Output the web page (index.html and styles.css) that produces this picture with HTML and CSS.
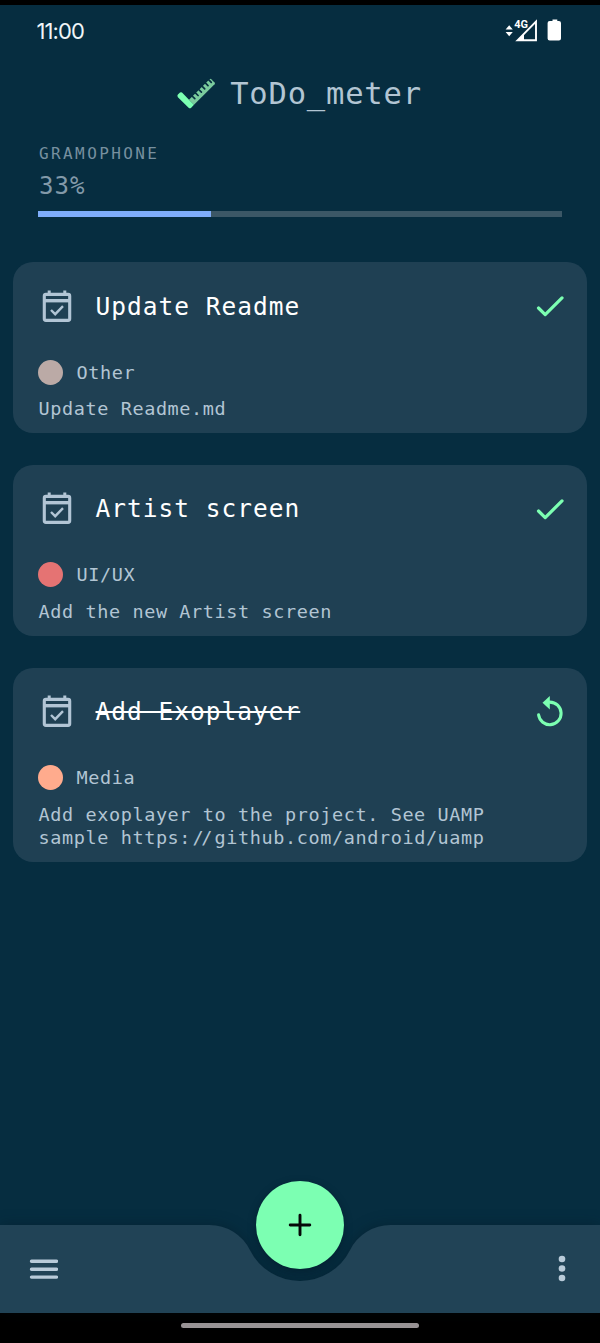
FILE: index.html
```html
<!DOCTYPE html>
<html lang="en">
<head>
<meta charset="utf-8">
<title>ToDo_meter</title>
<link rel="stylesheet" href="styles.css">
</head>
<body>
<svg class="defs" aria-hidden="true">
  <symbol id="calendar" viewBox="0 0 30 33">
    <path d="M7.200 0.500v4M22.800 0.500v4" stroke="currentColor" stroke-width="3"/>
    <path d="M2.300 10.700h25.400" stroke="currentColor" stroke-width="3.400"/>
    <rect x="2.300" y="4.400" width="25.400" height="26" rx="1.600" fill="none" stroke="currentColor" stroke-width="3.100"/>
    <path d="M9 20l4.200 4.200L21 16.100" fill="none" stroke="currentColor" stroke-width="2.400"/>
  </symbol>
  <symbol id="check" viewBox="0 0 28 22">
    <path d="M2.500 13l6.700 6.600L26 2.900" fill="none" stroke="currentColor" stroke-width="3.200" stroke-linecap="round" stroke-linejoin="round"/>
  </symbol>
  <symbol id="undo" viewBox="0 0 28 32">
    <path d="M13.800 6.100A11.300 11.300 0 1 1 2.600 18.900" fill="none" stroke="currentColor" stroke-width="3.100" stroke-linecap="round"/>
    <path d="M13.800 0v13.600L6.500 6.700z" fill="currentColor"/>
  </symbol>
</svg>
<div class="phone">
  <div class="status">
    <span class="clock">11:00</span>
    <svg class="status-icons" width="60" height="24" viewBox="0 0 60 24">
      <path d="M0.600 10.500h7.200L4.200 6.200zM0.600 12.900h7.200l-3.600 4.300z" fill="#fff"/>
      <path d="M12.500 21.300L31 2.500v18.800z" fill="none" stroke="#fff" stroke-width="1.900"/>
      <path d="M12 22l7-7v7z" fill="#fff"/>
      <text x="9.300" y="9" class="network">4G</text>
      <path d="M47 2h0.500V0.600h4.800V2h1.600q2.100 0 2.100 2.100V19.400q0 2.100-2.100 2.100H44.700q-2.100 0-2.100-2.100V4.100Q42.600 2 44.700 2z" fill="#fff"/>
    </svg>
  </div>

  <header class="brand">
    <svg class="logo" width="39" height="31" viewBox="0 0 39 31">
      <path d="M11 21.800L16 26.800L36.600 6.200Q37.400 5.300 36.600 4.400L33.200 1.200Q32.400 0.500 31.600 1.200z" fill="#7acb9d"/>
      <path d="M14.100 18l2.700 2.700M17.400 14.800l2.700 2.700M20.700 11.500l2.700 2.700M24 8.200l2.700 2.700M27.300 4.900l2.700 2.700M30.600 1.600l2.700 2.700" stroke="#062d40" stroke-width="1.700" stroke-linecap="round"/>
      <path d="M11 21.800L4 14.600Q3 13.700 2 14.600L-0.100 16.600Q-1.200 17.900 -0.100 19.200L10.600 29.700Q11.900 30.800 13.200 29.700L16 26.800z" fill="#7cffb2"/>
    </svg>
    <h1>ToDo_meter</h1>
  </header>

  <section class="progress">
    <div class="project">GRAMOPHONE</div>
    <div class="percent">33%</div>
    <div class="track"><div class="fill" style="width:33%"></div></div>
  </section>

  <main class="tasks">
    <article class="task">
      <div class="head">
        <svg class="cal"><use href="#calendar"/></svg>
        <h2>Update Readme</h2>
        <svg class="done"><use href="#check"/></svg>
      </div>
      <div class="tag"><i class="dot other"></i>Other</div>
      <p>Update Readme.md</p>
    </article>
    <article class="task">
      <div class="head">
        <svg class="cal"><use href="#calendar"/></svg>
        <h2>Artist screen</h2>
        <svg class="done"><use href="#check"/></svg>
      </div>
      <div class="tag"><i class="dot ui"></i>UI/UX</div>
      <p>Add the new Artist screen</p>
    </article>
    <article class="task">
      <div class="head">
        <svg class="cal"><use href="#calendar"/></svg>
        <h2 class="struck">Add Exoplayer</h2>
        <svg class="redo"><use href="#undo"/></svg>
      </div>
      <div class="tag"><i class="dot media"></i>Media</div>
      <p>Add exoplayer to the project. See UAMP<br>sample https:<span class="slashes"><span class="tight">/</span>/</span>github.com/android/uamp</p>
    </article>
  </main>

  <footer class="bottom">
    <svg class="bar-shape" width="600" height="88" viewBox="0 0 600 88">
      <path d="M0 0H209.600A45 45 0 0 1 249.900 25A56 56 0 0 0 350.100 25A45 45 0 0 1 390.400 0H600V88H0z" fill="#214356"/>
    </svg>
    <svg class="menu" width="29" height="21" viewBox="0 0 29 21">
      <path d="M2.500 2.300h25M2.500 10.200h25M2.500 18.100h25" stroke="#b9cbd9" stroke-width="3.400" stroke-linecap="round"/>
    </svg>
    <button class="fab" aria-label="Add task">
      <svg width="24" height="24" viewBox="0 0 24 24"><path d="M2.200 12h19.600M12 2.200v19.600" stroke="#050808" stroke-width="2.900" stroke-linecap="round"/></svg>
    </button>
    <svg class="more" width="8" height="28" viewBox="0 0 8 28">
      <g fill="#b9cbd9"><circle cx="4" cy="4" r="3.300"/><circle cx="4" cy="13.500" r="3.300"/><circle cx="4" cy="23" r="3.300"/></g>
    </svg>
  </footer>
  <div class="gesture"><div class="handle"></div></div>
</div>
</body>
</html>
```

FILE: styles.css
```css
* { box-sizing: border-box; }
body {
  margin: 0;
  background: #000;
  font-family: "DejaVu Sans Mono", monospace;
  color: #b2c5d3;
}
.defs { display: none; }
.phone {
  width: 600px;
  height: 1343px;
  display: flex;
  flex-direction: column;
  border-top: 5px solid #000;
  background: #062d40;
  overflow: hidden;
}
.status {
  height: 53px;
  padding: 0 36px 2px 36.500px;
  display: flex;
  justify-content: space-between;
  align-items: center;
  flex: none;
}
.clock {
  font: 400 22px/26px Inter, sans-serif;
  letter-spacing: -0.900px;
  color: #eef5f8;
}
.status-icons { margin-right: -0.500px; }
.network { font: 700 11px Roboto, sans-serif; fill: #fff; }
.brand {
  height: 70px;
  display: flex;
  justify-content: center;
  align-items: center;
  gap: 13px;
  flex: none;
}
.logo { overflow: visible; }
h1, h2, p { margin: 0; font-weight: 400; }
h1 {
  font-size: 30.500px;
  line-height: 36px;
  letter-spacing: 0.800px;
  padding-top: 1px;
}
.progress { height: 134px; padding: 15px 38px 0; flex: none; }
.project {
  padding-left: 1px;
  font-size: 16px;
  line-height: 22px;
  letter-spacing: 2.400px;
  color: #77909f;
}
.percent {
  padding-left: 1px;
  font-size: 24px;
  line-height: 30px;
  margin: 6px 0 9.500px;
  letter-spacing: 1px;
  color: #8299a9;
}
.track { height: 6px; background: #3b5766; }
.fill { height: 100%; background: #7eadfb; }
.tasks {
  flex: 1;
  padding: 0 13px;
  display: flex;
  flex-direction: column;
  gap: 31.500px;
}
.task {
  border-radius: 20px;
  background: #1f4053;
  padding: 26px 23px 12.800px 25px;
}
.head { display: flex; align-items: center; height: 36px; }
.cal { width: 30px; height: 33px; margin: 0 24px 0 3.500px; color: #b2c5d5; }
h2 {
  flex: 1;
  padding-top: 1px;
  font-size: 24.500px;
  line-height: 32px;
  letter-spacing: 1px;
  color: #fff;
}
.struck { flex: none; margin-right: auto; text-decoration: line-through 2px; }
.done { width: 28px; height: 22px; color: #7cffb2; }
.redo { width: 28px; height: 32px; color: #7cffb2; }
.tag {
  display: flex;
  align-items: center;
  gap: 13.500px;
  height: 26px;
  margin-top: 35px;
  font-size: 18.500px;
  letter-spacing: 0.600px;
}
.dot { width: 25px; height: 25px; border-radius: 50%; }
.other { background: #bbaaa6; }
.ui { background: #e57373; }
.media { background: #ffab8d; }
p {
  margin-top: 12px;
  padding-left: 0.500px;
  font-size: 18.500px;
  line-height: 23.500px;
  letter-spacing: 0.600px;
  white-space: nowrap;
}
.slashes { margin: 0 1.500px; }
.tight { letter-spacing: -2.400px; }
.bottom {
  position: relative;
  height: 88px;
  padding: 0 34px 0 29px;
  display: flex;
  justify-content: space-between;
  align-items: center;
  flex: none;
}
.bar-shape {
  position: absolute;
  left: 0;
  top: 0;
  overflow: visible;
  filter: drop-shadow(0 -1px 7px rgba(0, 15, 25, 0.300));
}
.menu, .more { position: relative; }
.fab {
  position: absolute;
  left: 256px;
  top: -44px;
  width: 88px;
  height: 88px;
  padding: 0;
  border: 0;
  border-radius: 50%;
  background: #7cffb2;
  display: grid;
  place-items: center;
  box-shadow: 0 3px 9px rgba(0, 12, 22, 0.350);
}
.gesture {
  height: 30px;
  background: #000;
  display: flex;
  justify-content: center;
  padding-top: 10px;
  flex: none;
}
.handle { width: 238px; height: 5px; border-radius: 3px; background: #999496; }
```
